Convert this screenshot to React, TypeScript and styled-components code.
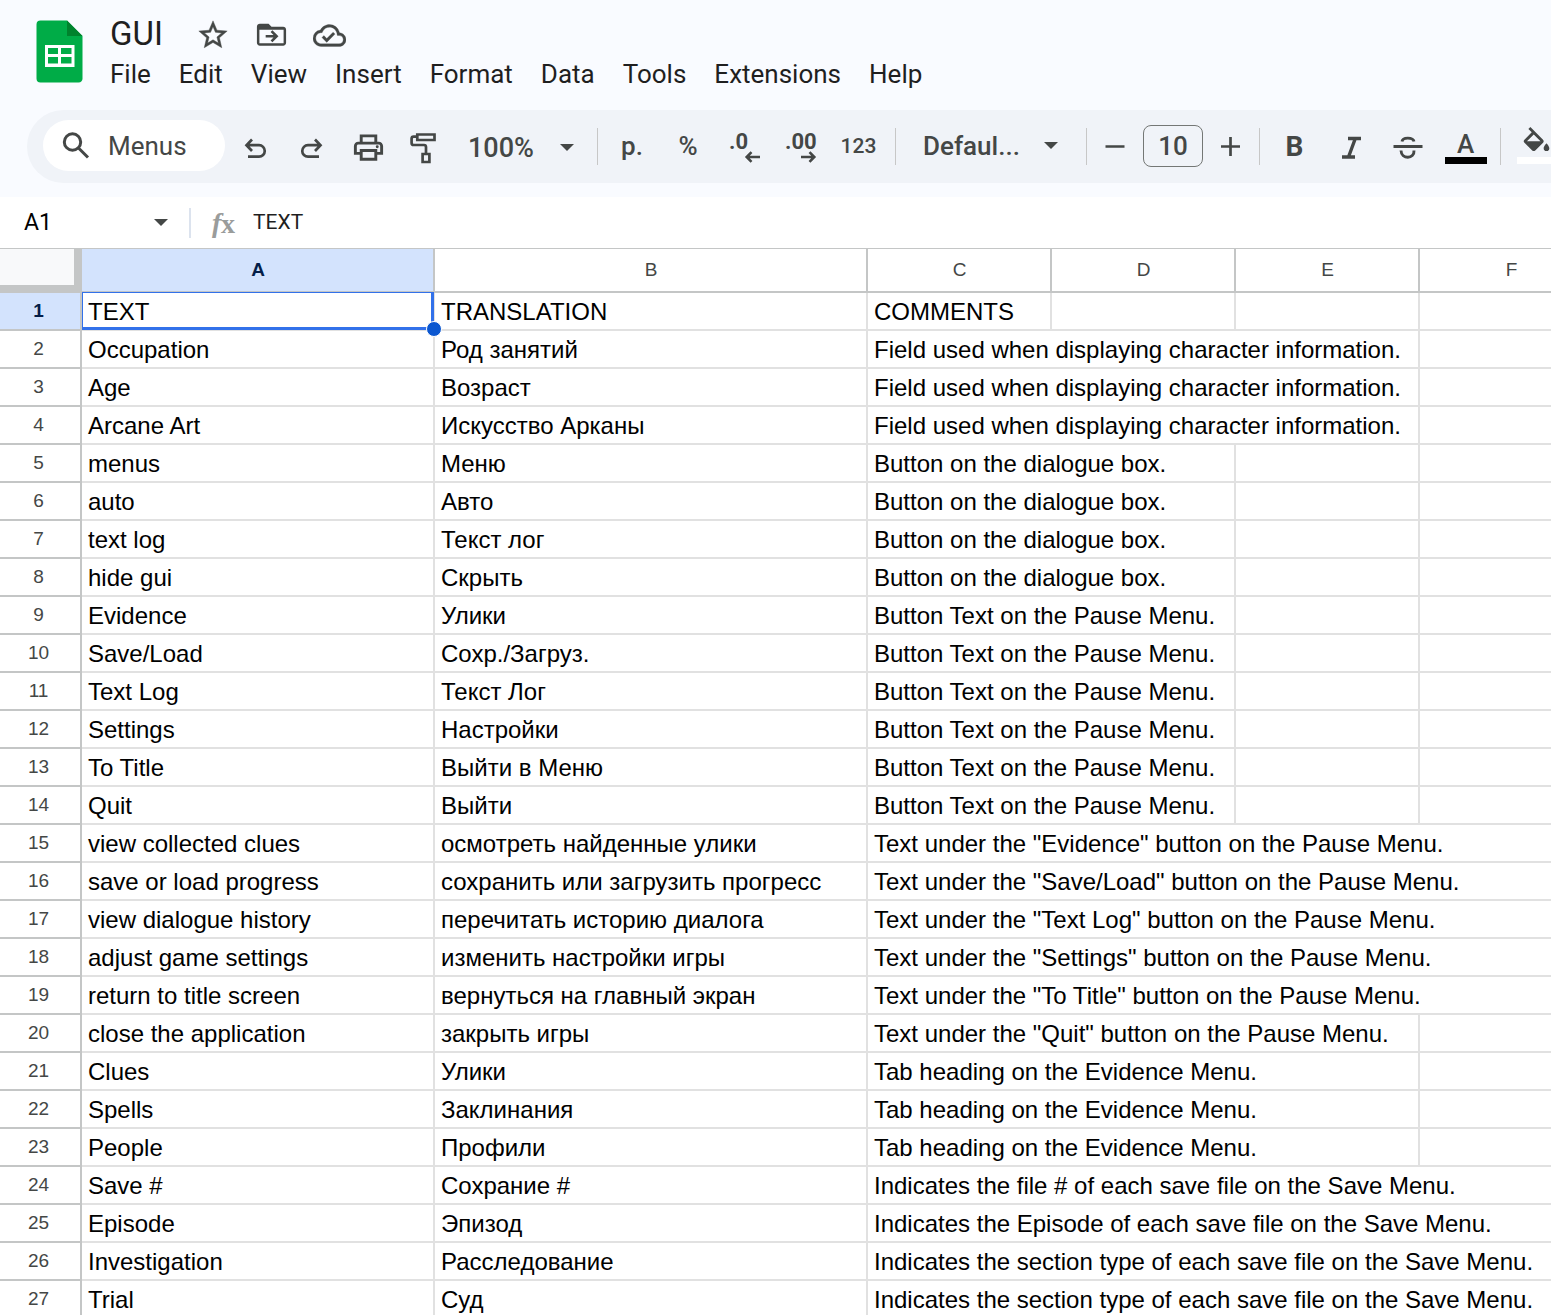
import React from "react";
import styled, { createGlobalStyle, css } from "styled-components";
import { MdOutlinePrint } from "react-icons/md";

const ink = "#444746";
const headLine = "#c4c6c6";
const gridLine = "#e1e1e1";
const uiFont = `Roboto, "Noto Sans", sans-serif`;
const sheetFont = `"Liberation Sans", Arial, sans-serif`;

const GlobalStyle = createGlobalStyle`
  *, *::before, *::after { box-sizing: border-box; }
  html, body { margin: 0; background: #fff; }
  body { overflow: hidden; font-family: ${uiFont}; color: ${ink}; }
  button, input, select { font: inherit; color: inherit; background: none; border: 0; padding: 0; margin: 0; border-radius: 0; outline: none; }
  svg { display: block; flex: none; }
`;

const Page = styled.div`
  display: flex;
  flex-direction: column;
  height: 100vh;
  overflow: hidden;
`;

const Chrome = styled.header`
  background: #f9fbff;
  padding-bottom: 14px;
`;

const DocHeader = styled.div`
  display: flex;
  gap: 27px;
  padding: 16px 0 18px 36px;
`;

const LogoLink = styled.a`
  display: block;
  padding-top: 4px;
`;

const DocInfo = styled.div`
  display: flex;
  flex-direction: column;
  gap: 4px;
`;

const TitleRow = styled.div`
  display: flex;
  align-items: center;
  height: 36px;
`;

const TitleInput = styled.input`
  width: 74px;
  height: 36px;
  font-size: 33px;
  line-height: 36px;
  color: #1f1f1f;
`;

const TitleButton = styled.button`
  display: flex;
  align-items: center;
  justify-content: center;
  width: 58px;
  height: 36px;
  padding-top: 2px;
`;

const MenuBar = styled.nav`
  display: flex;
  gap: 28px;
`;

const MenuButton = styled.button`
  font-size: 26px;
  line-height: 36px;
  color: #1f1f1f;
`;

const Toolbar = styled.div`
  display: flex;
  align-items: center;
  height: 73px;
  margin-left: 27px;
  padding: 0 0 2px 16px;
  overflow: hidden;
  background: #f0f3f8;
  border-radius: 37px 0 0 37px;
  font-size: 26px;
  font-weight: 500;

  > * { flex: none; }
`;

const SearchPill = styled.label`
  display: flex;
  align-items: center;
  gap: 14px;
  width: 182px;
  height: 51px;
  margin-right: 3px;
  padding-left: 15px;
  background: #fff;
  border-radius: 26px;
  font-weight: 400;
`;

const SearchInput = styled.input`
  width: 100px;
  &::placeholder { color: ${ink}; opacity: 1; }
`;

const ToolButton = styled.button<{ $width?: number; $size?: number; $weight?: number; $top?: number }>`
  display: flex;
  align-items: center;
  justify-content: center;
  width: ${(p) => p.$width ?? 56}px;
  height: 51px;
  padding-top: ${(p) => p.$top ?? 0}px;
  font-size: ${(p) => p.$size ?? 26}px;
  font-weight: ${(p) => p.$weight ?? 500};
`;

const ColorButton = styled(ToolButton)`
  flex-direction: column;
  justify-content: flex-start;
  height: 37px;
`;

const ColorGlyph = styled.span`
  display: flex;
  justify-content: center;
  height: 30px;
  line-height: 34px;
`;

const ColorBar = styled.span<{ $color: string }>`
  width: 42px;
  height: 7px;
  background: ${(p) => p.$color};
`;

const Divider = styled.span`
  width: 1px;
  height: 37px;
  margin: 2px 6px 0;
  background: #c7c7c7;
`;

const SelectBox = styled.label<{ $width: number; $inset: number; $top?: number }>`
  display: grid;
  align-items: center;
  width: ${(p) => p.$width}px;
  padding-top: ${(p) => p.$top ?? 0}px;

  > * { grid-area: 1 / 1; }
  > svg { justify-self: end; margin-right: ${(p) => p.$inset}px; pointer-events: none; }
`;

const Select = styled.select<{ $pad: number; $size?: number }>`
  appearance: none;
  width: 100%;
  height: 51px;
  padding-left: ${(p) => p.$pad}px;
  font-size: ${(p) => p.$size ?? 26}px;
`;

const SizeInput = styled.input`
  width: 60px;
  height: 42px;
  margin: 0 6px;
  border: 1px solid #747775;
  border-radius: 8px;
  text-align: center;
`;

const FormulaBar = styled.div`
  display: flex;
  align-items: center;
  flex: none;
  height: 52px;
  padding-bottom: 2px;
  border-bottom: 1px solid ${headLine};
`;

const NameInput = styled.input`
  width: 145px;
  padding: 2px 0 0 24px;
  font-size: 23px;
  color: #000;
`;

const NameButton = styled.button`
  display: flex;
  justify-content: center;
  width: 32px;
  padding: 14px 0 12px;
`;

const FormulaDivider = styled.span`
  width: 2px;
  height: 30px;
  margin: 2px 0 0 12px;
  background: #dce3ee;
`;

const FormulaLabel = styled.label`
  display: flex;
  flex: 1;
  align-items: center;
  gap: 13px;
  padding-left: 17px;
`;

const FormulaInput = styled.input`
  flex: 1;
  min-width: 0;
  font-size: 21px;
  color: #1f1f1f;
`;

const SheetView = styled.main`
  flex: 1;
  min-height: 0;
  overflow: hidden;
`;

const Sheet = styled.table`
  width: 1604px;
  table-layout: fixed;
  border-collapse: separate;
  border-spacing: 0;
  font-family: ${sheetFont};
`;

const activeHead = css`
  background: #d3e3fd;
  color: #041e49;
  font-weight: 700;
`;

const Corner = styled.td`
  height: 44px;
  padding: 0;
  background: #f8f9fa;
  border: solid ${headLine};
  border-width: 0 8px 8px 0;
`;

const ColumnHead = styled.th<{ $active: boolean }>`
  height: 44px;
  padding: 0 0 1px 1px;
  border: solid ${headLine};
  border-width: 0 2px 2px 0;
  font-size: 19px;
  font-weight: 400;
  ${(p) => p.$active && activeHead}
`;

const RowHead = styled.th<{ $active: boolean }>`
  height: 38px;
  padding: 1px 3px 0 0;
  border: solid ${headLine};
  border-width: 0 2px 2px 0;
  font-size: 19px;
  font-weight: 400;
  line-height: 34px;
  vertical-align: top;
  ${(p) => p.$active && activeHead}
`;

const Cell = styled.td`
  position: relative;
  height: 38px;
  padding: 1px 0 0 6px;
  border: solid ${gridLine};
  border-width: 0 2px 2px 0;
  font-size: 24px;
  line-height: 35px;
  color: #000;
  white-space: nowrap;
`;

const Selection = styled.span`
  position: absolute;
  z-index: 1;
  inset: -1px -1px -1px 0;
  border: solid #3271ea;
  border-width: 1px 3px 3px 1px;
`;

const FillHandle = styled.span`
  position: absolute;
  z-index: 2;
  right: -9px;
  bottom: -8px;
  width: 16px;
  height: 16px;
  background: #0b57d0;
  border: 1px solid #fff;
  border-radius: 50%;
`;

const Arrow = () => (
  <svg width="14" height="7" viewBox="0 0 14 7" aria-hidden="true">
    <path d="M0 0h14L7 7z" fill={ink} />
  </svg>
);

const Line = ({ children, w = 2.7 }: { children: React.ReactNode; w?: number }) => (
  <svg width="36" height="36" viewBox="0 0 36 36" fill="none" stroke={ink} strokeWidth={w} aria-hidden="true">
    {children}
  </svg>
);

const SheetsLogo = () => (
  <svg width="47" height="63" viewBox="0 0 47 63" aria-hidden="true">
    <path d="M4.5.5H31l15.5 15.5v42a4 4 0 0 1-4 4.500h-38a4 4 0 0 1-4-4v-54a4 4 0 0 1 4-4z" fill="#00ac47" />
    <path d="M31 .5 46.500 16H31z" fill="#00832d" />
    <path d="M9 25h29.500v22H9zM12 28v6h10v-6zM25 28v6h10.500v-6zM12 37v6.500h10V37zM25 37v6.500h10.500V37z" fill="#fff" fillRule="evenodd" />
  </svg>
);

const StarIcon = () => (
  <svg width="34" height="34" viewBox="0 0 24 24" fill={ink} stroke={ink} strokeWidth="0.3" aria-hidden="true">
    <path d="m22 9.240-7.190-.62L12 2 9.190 8.630 2 9.240l5.460 4.730L5.820 21 12 17.270 18.180 21l-1.630-7.030L22 9.240zM12 15.400l-3.760 2.270 1-4.280-3.320-2.880 4.380-.38L12 6.100l1.710 4.040 4.380.38-3.320 2.880 1 4.280L12 15.400z" />
  </svg>
);

const CloudIcon = () => (
  <svg width="33" height="33" viewBox="0 0 24 24" fill={ink} stroke={ink} strokeWidth="0.2" aria-hidden="true">
    <path d="M19.350 10.040A7.490 7.490 0 0 0 12 4C9.110 4 6.600 5.640 5.350 8.040A5.994 5.994 0 0 0 0 14c0 3.310 2.690 6 6 6h13c2.760 0 5-2.240 5-5 0-2.640-2.050-4.780-4.650-4.960zM19 18H6c-2.210 0-4-1.790-4-4 0-2.050 1.530-3.760 3.560-3.970l1.070-.11.5-.95A5.469 5.469 0 0 1 12 6c2.620 0 4.880 1.860 5.390 4.430l.3 1.500 1.530.11A2.980 2.980 0 0 1 22 15c0 1.650-1.350 3-3 3zm-9-3.820-2.090-2.090L6.500 13.500 10 17l6.010-6.010-1.410-1.410z" />
  </svg>
);

const FolderMove = () => (
  <svg width="35" height="35" viewBox="0 0 24 24" fill={ink} aria-hidden="true">
    <path fillRule="evenodd" d="M20 6h-8l-2-2H4c-1.100 0-2 .9-2 2v11c0 1.100.9 2 2 2h16c1.100 0 2-.9 2-2V8c0-1.100-.9-2-2-2zm.3 11.300H3.700V8h16.600z" />
    <path d="M8 12.500h7M12 9l3.500 3.500L12 16" fill="none" stroke={ink} strokeWidth="1.800" />
  </svg>
);

const SearchIcon = () => (
  <svg width="36" height="36" viewBox="0 0 36 36" fill="none" stroke={ink} strokeWidth="3" aria-hidden="true">
    <circle cx="14.500" cy="14" r="8.200" />
    <path d="M20.500 20 30 29.500" />
  </svg>
);

const FxIcon = () => (
  <svg width="32" height="42" viewBox="0 0 32 42" fill="#9a9c9b" aria-hidden="true">
    <text x="4" y="31" fontFamily="Liberation Serif, serif" fontSize="28" fontWeight="700" fontStyle="italic">f</text>
    <text x="13" y="32" fontFamily="Liberation Serif, serif" fontSize="28" fontWeight="700">x</text>
  </svg>
);

const Decimals = ({ digits, children }: { digits: string; children: React.ReactNode }) => (
  <svg width="36" height="36" viewBox="0 0 36 36" aria-hidden="true">
    <text x="3" y="21" fontFamily="Roboto, sans-serif" fontSize="22" fontWeight="700" fill={ink}>{digits}</text>
    <g fill="none" stroke={ink} strokeWidth="2.600">{children}</g>
  </svg>
);

const menus = ["File", "Edit", "View", "Insert", "Format", "Data", "Tools", "Extensions", "Help"];

const columns = [
  { name: "A", width: 353 },
  { name: "B", width: 433 },
  { name: "C", width: 184 },
  { name: "D", width: 184 },
  { name: "E", width: 184 },
  { name: "F", width: 184 },
];

const field = "Field used when displaying character information.";
const box = "Button on the dialogue box.";
const pause = "Button Text on the Pause Menu.";
const under = (name: string) => `Text under the "${name}" button on the Pause Menu.`;
const tab = "Tab heading on the Evidence Menu.";
const section = "Indicates the section type of each save file on the Save Menu.";

/* text, translation, comment, number of columns the comment runs across */
const rows: [string, string, string, number][] = [
  ["TEXT", "TRANSLATION", "COMMENTS", 1],
  ["Occupation", "Род занятий", field, 3],
  ["Age", "Возраст", field, 3],
  ["Arcane Art", "Искусство Арканы", field, 3],
  ["menus", "Меню", box, 2],
  ["auto", "Авто", box, 2],
  ["text log", "Текст лог", box, 2],
  ["hide gui", "Скрыть", box, 2],
  ["Evidence", "Улики", pause, 2],
  ["Save/Load", "Сохр./Загруз.", pause, 2],
  ["Text Log", "Текст Лог", pause, 2],
  ["Settings", "Настройки", pause, 2],
  ["To Title", "Выйти в Меню", pause, 2],
  ["Quit", "Выйти", pause, 2],
  ["view collected clues", "осмотреть найденные улики", under("Evidence"), 4],
  ["save or load progress", "сохранить или загрузить прогресс", under("Save/Load"), 4],
  ["view dialogue history", "перечитать историю диалога", under("Text Log"), 4],
  ["adjust game settings", "изменить настройки игры", under("Settings"), 4],
  ["return to title screen", "вернуться на главный экран", under("To Title"), 4],
  ["close the application", "закрыть игры", under("Quit"), 3],
  ["Clues", "Улики", tab, 3],
  ["Spells", "Заклинания", tab, 3],
  ["People", "Профили", tab, 3],
  ["Save #", "Сохрание #", "Indicates the file # of each save file on the Save Menu.", 4],
  ["Episode", "Эпизод", "Indicates the Episode of each save file on the Save Menu.", 4],
  ["Investigation", "Расследование", section, 4],
  ["Trial", "Суд", section, 4],
];

export default function App() {
  return (
    <Page>
      <GlobalStyle />
      <Chrome>
        <DocHeader>
          <LogoLink href="#" aria-label="Sheets home"><SheetsLogo /></LogoLink>
          <DocInfo>
            <TitleRow>
              <TitleInput aria-label="Rename" defaultValue="GUI" />
              <TitleButton aria-label="Star"><StarIcon /></TitleButton>
              <TitleButton aria-label="Move"><FolderMove /></TitleButton>
              <TitleButton aria-label="Document status"><CloudIcon /></TitleButton>
            </TitleRow>
            <MenuBar>
              {menus.map((m) => <MenuButton key={m}>{m}</MenuButton>)}
            </MenuBar>
          </DocInfo>
        </DocHeader>
        <Toolbar role="toolbar">
          <SearchPill>
            <SearchIcon />
            <SearchInput aria-label="Search the menus" placeholder="Menus" />
          </SearchPill>
          <ToolButton aria-label="Undo">
            <Line><path d="M14 11.500 8.500 17.200 14 23M9 17.200h12a5.700 5.700 0 0 1 0 11.500H10" /></Line>
          </ToolButton>
          <ToolButton aria-label="Redo">
            <Line><path d="M21 11.500 26.500 17.200 21 23M26 17.200H14a5.700 5.700 0 0 0 0 11.500h11" /></Line>
          </ToolButton>
          <ToolButton aria-label="Print" $top={4}><MdOutlinePrint size={35} color={ink} /></ToolButton>
          <ToolButton aria-label="Paint format">
            <Line>
              <path d="M11.300 6.500h17.200V12H11.300zM11 8.600H7.600a2 2 0 0 0-2 2V15a2 2 0 0 0 2 2H18a2 2 0 0 1 2 2v6M16.600 26h6.800v8h-6.800z" />
            </Line>
          </ToolButton>
          <SelectBox $width={139} $inset={17} $top={4}>
            <Select $pad={16} $size={27} aria-label="Zoom"><option>100%</option></Select>
            <Arrow />
          </SelectBox>
          <Divider />
          <ToolButton aria-label="Format as currency">р.</ToolButton>
          <ToolButton aria-label="Format as percent">%</ToolButton>
          <ToolButton aria-label="Decrease decimal places">
            <Decimals digits=".0"><path d="M34 29H21M25.500 24.200 20.700 29l4.800 4.800" /></Decimals>
          </ToolButton>
          <ToolButton aria-label="Increase decimal places">
            <Decimals digits=".00"><path d="M19 29h13M27.500 24.200l4.800 4.800-4.800 4.800" /></Decimals>
          </ToolButton>
          <ToolButton aria-label="More formats" $width={61} $size={21}>123</ToolButton>
          <Divider />
          <SelectBox $width={178} $inset={22}>
            <Select $pad={21} aria-label="Font"><option>Defaul...</option></Select>
            <Arrow />
          </SelectBox>
          <Divider />
          <ToolButton aria-label="Decrease font size" $width={44}>
            <Line><path d="M8.500 18.500h19" /></Line>
          </ToolButton>
          <SizeInput aria-label="Font size" defaultValue="10" />
          <ToolButton aria-label="Increase font size" $width={44}>
            <Line><path d="M8 18.500h19M17.500 9v19" /></Line>
          </ToolButton>
          <Divider />
          <ToolButton aria-label="Bold" $width={57} $size={28} $weight={700} $top={2}>B</ToolButton>
          <ToolButton aria-label="Italic" $width={57}>
            <Line w={3.4}><path d="M14 10.500h13M8 29H21M21.300 10.500l-6.800 18.500" /></Line>
          </ToolButton>
          <ToolButton aria-label="Strikethrough" $width={57}>
            <Line w={2.9}>
              <path d="M2.500 18.500h29M11 13.500c.5-4.500 11-4.500 12 0M10 22.500c.3 9 13.700 9 13 0" />
            </Line>
          </ToolButton>
          <ColorButton aria-label="Text color" $width={57}>
            <ColorGlyph>A</ColorGlyph>
            <ColorBar $color="#000" />
          </ColorButton>
          <Divider />
          <ColorButton aria-label="Fill color" $width={62}>
            <ColorGlyph>
              <svg width="34" height="34" viewBox="1 0 24 24" fill={ink} aria-hidden="true">
                <path d="M16.560 8.940 7.620 0 6.210 1.410l2.380 2.380-5.150 5.150a1.490 1.490 0 0 0 0 2.120l5.500 5.500c.29.29.68.44 1.060.44s.77-.15 1.060-.44l5.500-5.500c.59-.58.59-1.530 0-2.120zM5.210 10 10 5.210 14.790 10zM19 11.500s-2 2.170-2 3.500a2 2 0 0 0 4 0c0-1.330-2-3.500-2-3.500z" />
              </svg>
            </ColorGlyph>
            <ColorBar $color="#fff" />
          </ColorButton>
        </Toolbar>
      </Chrome>
      <FormulaBar>
        <NameInput aria-label="Name box" defaultValue="A1" />
        <NameButton aria-label="Named ranges"><Arrow /></NameButton>
        <FormulaDivider />
        <FormulaLabel>
          <FxIcon />
          <FormulaInput aria-label="Formula" defaultValue="TEXT" />
        </FormulaLabel>
      </FormulaBar>
      <SheetView>
        <Sheet>
          <colgroup>
            <col width={82} />
            {columns.map((c) => <col key={c.name} width={c.width} />)}
          </colgroup>
          <thead>
            <tr>
              <Corner />
              {columns.map((c, i) => (
                <ColumnHead key={c.name} scope="col" $active={i === 0}>{c.name}</ColumnHead>
              ))}
            </tr>
          </thead>
          <tbody>
            {rows.map(([text, translation, comment, span], i) => (
              <tr key={i}>
                <RowHead scope="row" $active={i === 0}>{i + 1}</RowHead>
                <Cell>
                  {text}
                  {i === 0 && <><Selection /><FillHandle /></>}
                </Cell>
                <Cell>{translation}</Cell>
                <Cell colSpan={span}>{comment}</Cell>
                {Array.from({ length: 4 - span }, (_, k) => <Cell key={k} />)}
              </tr>
            ))}
          </tbody>
        </Sheet>
      </SheetView>
    </Page>
  );
}
